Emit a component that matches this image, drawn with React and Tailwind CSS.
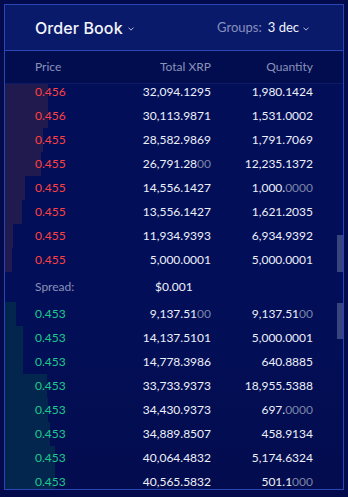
import { useMemo } from 'react'

const ASKS = [
  ['0.456', '32,094.1295', '1,980.1424', 43],
  ['0.456', '30,113.9871', '1,531.0002', 43],
  ['0.455', '28,582.9869', '1,791.7069', 38],
  ['0.455', '26,791.2800', '12,235.1372', 36],
  ['0.455', '14,556.1427', '1,000.0000', 20],
  ['0.455', '13,556.1427', '1,621.2035', 17],
  ['0.455', '11,934.9393', '6,934.9392', 8],
  ['0.455', '5,000.0001', '5,000.0001', 7],
]

const BIDS = [
  ['0.453', '9,137.5100', '9,137.5100', 11],
  ['0.453', '14,137.5101', '5,000.0001', 18],
  ['0.453', '14,778.3986', '640.8885', 18],
  ['0.453', '33,733.9373', '18,955.5388', 42],
  ['0.453', '34,430.9373', '697.0000', 43],
  ['0.453', '34,889.8507', '458.9134', 45],
  ['0.453', '40,064.4832', '5,174.6324', 50],
  ['0.453', '40,565.5832', '501.1000', 50],
]

function Num({ value }) {
  const m = value.match(/^(.*\.\d*?)(0+)$/)
  if (!m) return <span>{value}</span>
  return (
    <span>
      {m[1]}
      <span className="text-[#7c84a8]">{m[2]}</span>
    </span>
  )
}

function Chevron({ className }) {
  return (
    <svg className={className} viewBox="0 0 8 5" fill="none" stroke="currentColor" strokeWidth="1.2">
      <path d="M1 1l3 3 3-3" strokeLinecap="round" strokeLinejoin="round" />
    </svg>
  )
}

function Row({ row, side }) {
  const [price, total, qty, depth] = row
  return (
    <div className="relative h-[24px] flex items-center pl-[30px] pr-[30px] text-[12px]">
      <div
        className={`absolute left-0 top-0 bottom-0 ${side === 'ask' ? 'bg-[#201a4f]' : 'bg-[#03264f]'}`}
        style={{ width: depth }}
      />
      <span className={`relative w-[80px] ${side === 'ask' ? 'text-[#ff4040]' : 'text-[#1cc98c]'}`}>{price}</span>
      <span className="relative w-[96px] text-right text-[#eef0fa]"><Num value={total} /></span>
      <span className="relative flex-1 text-right text-[#eef0fa]"><Num value={qty} /></span>
    </div>
  )
}

export default function App() {
  const asks = useMemo(() => ASKS, [])
  const bids = useMemo(() => BIDS, [])

  return (
    <div className="w-[348px] h-[497px] bg-[#030b4c] p-[4px] font-['Lato',sans-serif]">
      <div className="h-[486px] border border-[#2a45b4] flex flex-col overflow-hidden bg-[#020f58]">
        <div className="shrink-0 h-[46px] bg-[#0a1a6b] border-b border-[#2a45b4] flex items-center justify-between pl-[30px] pr-[34px]">
          <div className="flex items-center gap-[5px]">
            <span className="text-[16px] font-medium text-[#f2f4fb] font-['Inter',sans-serif] tracking-[0.1px]">Order Book</span>
            <Chevron className="w-[6px] h-[4px] text-[#c8cde6] mt-[3px]" />
          </div>
          <div className="flex items-center text-[13px] mt-[1px]">
            <span className="text-[#8790bd]">Groups:</span>
            <span className="ml-[6px] text-[#f2f4fb]">3 dec</span>
            <Chevron className="ml-[4px] w-[6px] h-[4px] text-[#c8cde6] mt-[2px]" />
          </div>
        </div>

        <div className="shrink-0 h-[33px] flex items-center pl-[30px] pr-[30px] text-[12px] text-[#8a92b8] border-b border-[#0d1a66] bg-[#020d50]">
          <span className="w-[80px]">Price</span>
          <span className="w-[96px] text-right">Total XRP</span>
          <span className="flex-1 text-right">Quantity</span>
        </div>

        <div className="shrink-0 relative h-[188px] overflow-hidden">
          <div className="mt-[-4px]">
            {asks.map((r, i) => <Row key={i} row={r} side="ask" />)}
          </div>
          <div className="absolute right-0 bottom-0 w-[6px] h-[37px] bg-[#38447e]" />
        </div>

        <div className="shrink-0 h-[30px] flex items-center pl-[30px] text-[12px]">
          <span className="w-[80px] text-[#8a92b8]">Spread:</span>
          <span className="pl-[40px] text-[#eef0fa]">$0.001</span>
        </div>

        <div className="flex-1 relative overflow-hidden bg-gradient-to-b from-[#020f58] to-[#030c4e]">
          <div>
            {bids.map((r, i) => <Row key={i} row={r} side="bid" />)}
          </div>
          <div className="absolute right-0 top-[1px] w-[6px] h-[36px] bg-[#38447e]" />
        </div>
      </div>
    </div>
  )
}
